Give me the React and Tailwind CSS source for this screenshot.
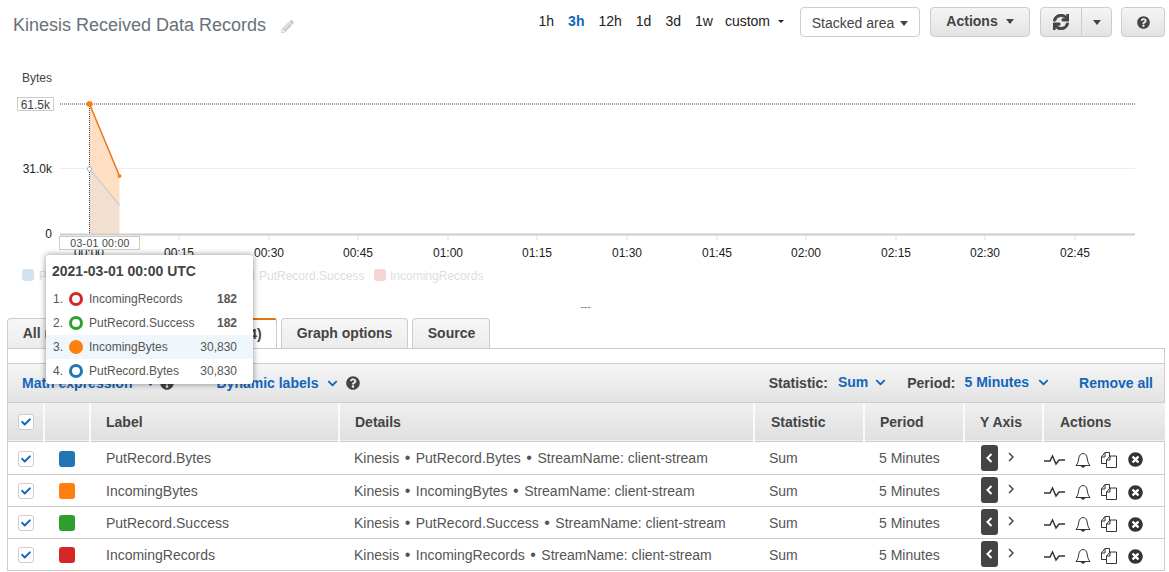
import { FaSync, FaQuestionCircle, FaPencilAlt, FaCheck, FaTimesCircle, FaChevronDown } from 'react-icons/fa';

const RANGES = ['1h', '3h', '12h', '1d', '3d', '1w'];
const TICKS = [
  ['00:15', 179], ['00:30', 269], ['00:45', 358], ['01:00', 448], ['01:15', 537], ['01:30', 627],
  ['01:45', 717], ['02:00', 806], ['02:15', 896], ['02:30', 985], ['02:45', 1075],
];
const TOOLTIP_ROWS = [
  { n: 1, label: 'IncomingRecords', value: '182', color: 'border-[#d62728]', bold: true },
  { n: 2, label: 'PutRecord.Success', value: '182', color: 'border-[#2ca02c]', bold: true },
  { n: 3, label: 'IncomingBytes', value: '30,830', color: 'border-[#ff7f0e] bg-[#ff7f0e]', active: true },
  { n: 4, label: 'PutRecord.Bytes', value: '30,830', color: 'border-[#1f77b4]' },
];
const METRICS = [
  { label: 'PutRecord.Bytes', color: 'bg-[#1f77b4]', h: 'h-[33px]' },
  { label: 'IncomingBytes', color: 'bg-[#ff7f0e]', h: 'h-[32px]' },
  { label: 'PutRecord.Success', color: 'bg-[#2ca02c]', h: 'h-[32px]' },
  { label: 'IncomingRecords', color: 'bg-[#d62728]', h: 'h-[32px]' },
];

function Caret() {
  return <span className="inline-block w-0 h-0 border-x-[4px] border-x-transparent border-t-[5px] border-t-[#444]" />;
}

function Checkbox() {
  return (
    <span className="flex items-center justify-center w-[16px] h-[16px] rounded-[3px] border border-[#ccc] bg-white">
      <FaCheck className="text-[#1166bb] text-[10px]" />
    </span>
  );
}

function Chart() {
  return (
    <svg width="1169" height="256" viewBox="0 46 1169 256" className="block" fontFamily="Liberation Sans, Arial, sans-serif">
      <text x="22" y="82" fontSize="12" fill="#444">Bytes</text>
      <line x1="60" x2="1135" y1="104" y2="104" stroke="#444" strokeDasharray="1 1" />
      <line x1="60" x2="1135" y1="168.5" y2="168.5" stroke="#eee" />
      <rect x="17.5" y="97.5" width="36" height="13" fill="#fff" stroke="#ccc" />
      <text x="50" y="109" fontSize="12" fill="#444" textAnchor="end">61.5k</text>
      <text x="52" y="173" fontSize="12" fill="#222" textAnchor="end">31.0k</text>
      <text x="52" y="238" fontSize="12" fill="#222" textAnchor="end">0</text>
      <polygon points="89.5,104 119.5,176 119.5,205 89.5,169" fill="#ffdfc3" />
      <polygon points="89.5,169 119.5,205 119.5,234 89.5,234" fill="#f3dfcf" />
      <line x1="89.5" x2="119.5" y1="169" y2="205" stroke="#d0d0d0" strokeWidth="1.5" />
      <line x1="89.5" x2="119.5" y1="104" y2="176" stroke="#e5761a" strokeWidth="1.5" />
      <line x1="89.5" x2="89.5" y1="104" y2="234" stroke="#444" strokeDasharray="1 1" />
      <circle cx="89.5" cy="104" r="3" fill="#ff7f0e" />
      <circle cx="119.5" cy="176" r="2" fill="#ff7f0e" />
      <circle cx="89.5" cy="169" r="2.2" fill="#fff" stroke="#8fb6d3" />
      <line x1="60" x2="1135" y1="234.5" y2="234.5" stroke="#ccc" strokeWidth="2" />
      {TICKS.map(([t, x]) => (
        <g key={t}>
          <line x1={x} x2={x} y1="235" y2="240" stroke="#ddd" />
          <text x={x} y="257" fontSize="12" fill="#222" textAnchor="middle">{t}</text>
        </g>
      ))}
      <text x="89" y="257" fontSize="12" fill="#222" textAnchor="middle">00:00</text>
      <rect x="59.5" y="236.5" width="80" height="13" fill="#fff" stroke="#ccc" />
      <text x="100" y="247" fontSize="10.5" fill="#444" textAnchor="middle" letterSpacing="0.3">03-01 00:00</text>
      <rect x="22" y="269" width="12" height="12" rx="3" fill="#d2e3f0" />
      <text x="39" y="280" fontSize="12" fill="#ddd">PutRecord.Bytes</text>
      <rect x="126" y="269" width="12" height="12" rx="3" fill="#ffe5cf" />
      <text x="143" y="280" fontSize="12" fill="#ddd">IncomingBytes</text>
      <rect x="242" y="269" width="12" height="12" rx="3" fill="#d5ecd5" />
      <text x="259" y="280" fontSize="12" fill="#ddd">PutRecord.Success</text>
      <rect x="374" y="269" width="12" height="12" rx="3" fill="#f7d4d4" />
      <text x="390" y="280" fontSize="12" fill="#ddd">IncomingRecords</text>
    </svg>
  );
}

function Tooltip() {
  return (
    <div className="absolute left-[46px] top-[255px] w-[207px] h-[129px] bg-white rounded-[3px] shadow-[0_0_6px_rgba(0,0,0,0.45)]">
      <div className="h-[32px] pl-[6px] pt-[8px] text-[14px] leading-[16px] font-bold text-[#444]">2021-03-01 00:00 UTC</div>
      {TOOLTIP_ROWS.map((r) => (
        <div key={r.n} className={`flex items-center h-[24px] text-[12px] text-[#555] ${r.active ? 'bg-[#f0f7fc]' : ''}`}>
          <span className="w-[23px] pl-[7px]">{r.n}.</span>
          <span className={`w-[14px] h-[14px] rounded-full border-[3px] ${r.color}`} />
          <span className="ml-[6px] flex-1">{r.label}</span>
          <span className={`pr-[16px] ${r.bold ? 'font-bold' : ''}`}>{r.value}</span>
        </div>
      ))}
    </div>
  );
}

function Tabs() {
  const base = 'flex items-center justify-center h-[30px] border border-b-0 border-[#ccc] rounded-t-[4px] bg-gradient-to-b from-[#f7f7f7] to-[#ececec] text-[14px] font-bold text-[#444]';
  return (
    <div className="flex items-end gap-[4px] pl-[7px] h-[30px]">
      <div className={`${base} w-[103px]`}>All metrics</div>
      <div className="flex items-center justify-center w-[163px] h-[30px] border-x border-[#ccc] border-t-[2px] border-t-[#dd7711] bg-white text-[14px] font-bold text-[#444] rounded-t-[3px]">Graphed metrics (4)</div>
      <div className={`${base} w-[127px]`}>Graph options</div>
      <div className={`${base} w-[78px] pl-[1px]`}>Source</div>
    </div>
  );
}

function Toolbar() {
  return (
    <div className="flex items-center h-[40px] pl-[14px] pr-[11px] bg-gradient-to-b from-[#f5f5f5] to-[#e3e3e3] border-y border-[#ccc] text-[14px] font-bold">
      <span className="text-[#1166bb]">Math expression</span>
      <FaChevronDown className="ml-[14px] text-[#1166bb] text-[9px]" />
      <FaQuestionCircle className="ml-[5px] text-[#444] text-[14px]" />
      <span className="ml-[42px] text-[#1166bb]">Dynamic labels</span>
      <FaChevronDown className="ml-[9px] text-[#1166bb] text-[11px]" />
      <FaQuestionCircle className="ml-[8px] text-[#444] text-[14px]" />
      <span className="ml-auto text-[#444]">Statistic:</span>
      <span className="ml-[10px] text-[#1166bb] -mt-[2px]">Sum</span>
      <FaChevronDown className="ml-[7px] text-[#1166bb] text-[11px] -mt-[2px]" />
      <span className="ml-[21px] text-[#444]">Period:</span>
      <span className="ml-[9px] text-[#1166bb] -mt-[2px]">5 Minutes</span>
      <FaChevronDown className="ml-[9px] text-[#1166bb] text-[11px] -mt-[2px]" />
      <span className="ml-[30px] text-[#1166bb]">Remove all</span>
    </div>
  );
}

function RowActions() {
  return (
    <div className="flex items-center mt-[4px] pl-[1px]">
      <svg width="21" height="12" viewBox="0 0 21 12" fill="none" stroke="#333" strokeWidth="1.5">
        <path d="M0 7h6l2.500-5 3.500 8 3-4h6" />
      </svg>
      <svg className="ml-[10px]" width="16" height="16" viewBox="0 0 16 16" fill="none" stroke="#333">
        <path d="M1 13.500c2-2 2.300-4.500 2.800-7.500C4.200 3.300 6 1.500 8 1.500s3.800 1.800 4.200 4.500c.5 3 .8 5.500 2.800 7.500z" />
        <path d="M6 14c.4 1.500 3.600 1.500 4 0" fill="#333" />
      </svg>
      <svg className="ml-[10px]" width="16" height="16" viewBox="0 0 16 16" fill="none" stroke="#333">
        <path d="M5.500 11.500H.5V5l3.500-4.500h4.500V4" />
        <path d="M4 .5V5H.5" />
        <path d="M5.500 8l3.500-4h6.500v11.500h-10z" fill="#fff" />
        <path d="M9 4v4H5.500" />
      </svg>
      <FaTimesCircle className="ml-[11px] text-[#333] text-[15px]" />
    </div>
  );
}

function YAxisToggle() {
  return (
    <div className="flex items-center">
      <span className="flex items-center justify-center w-[17px] h-[26px] rounded-[3px] bg-[#444]">
        <svg width="7" height="10" viewBox="0 0 7 10" fill="none" stroke="#fff" strokeWidth="2"><path d="M5.500 1L1.500 5l4 4" /></svg>
      </span>
      <svg className="ml-[10px] -mt-[2px]" width="6" height="10" viewBox="0 0 6 10" fill="none" stroke="#444" strokeWidth="1.5"><path d="M1 1l4 4-4 4" /></svg>
    </div>
  );
}

function Details({ label }) {
  return (
    <>
      Kinesis<span className="mx-[5.5px] text-[16px] leading-none">•</span>{label}<span className="mx-[5.5px] text-[16px] leading-none">•</span>StreamName: client-stream
    </>
  );
}

function MetricsTable() {
  const th = 'text-left font-bold text-[14px] text-[#444] border-l-2 border-white/80 pt-[2px] pl-[15px]';
  return (
    <table className="w-[1157px] table-fixed border-collapse text-[14px] text-[#555]">
      <thead>
        <tr className="h-[38px] bg-gradient-to-b from-[#f0f0f0] to-[#e0e0e0] border-b border-[#ccc]">
          <th className="w-[36px] pl-[10px]"><Checkbox /></th>
          <th className="w-[46px] border-l-2 border-white/80" />
          <th className={`w-[249px] ${th}`}>Label</th>
          <th className={`w-[415px] ${th}`}>Details</th>
          <th className={`w-[110px] ${th} pl-[16px]`}>Statistic</th>
          <th className={`w-[100px] ${th}`}>Period</th>
          <th className={`w-[79px] ${th}`}>Y Axis</th>
          <th className={`${th} pl-[16px]`}>Actions</th>
        </tr>
      </thead>
      <tbody>
        {METRICS.map((m) => (
          <tr key={m.label} className={`${m.h} border-b border-[#ccc]`}>
            <td className="pl-[10px] pt-[2px]"><Checkbox /></td>
            <td className="pl-[15px] pt-[2px]"><span className={`block w-[16px] h-[16px] rounded-[3px] ${m.color}`} /></td>
            <td className="pl-[16px] pt-[2px]">{m.label}</td>
            <td className="pl-[15px] pt-[2px]"><Details label={m.label} /></td>
            <td className="pl-[15px] pt-[2px]">Sum</td>
            <td className="pl-[15px] pt-[2px]">5 Minutes</td>
            <td className="pl-[17px]"><YAxisToggle /></td>
            <td className="pl-0"><RowActions /></td>
          </tr>
        ))}
      </tbody>
    </table>
  );
}

export default function App() {
  return (
    <div className="relative w-[1169px] h-[572px] overflow-hidden bg-white font-['Liberation_Sans',Arial,sans-serif]">
      <header className="flex items-start h-[46px] pr-[4px]">
        <h1 className="ml-[13px] mt-[14px] text-[18px] leading-[22px] text-[#687078]">Kinesis Received Data Records</h1>
        <FaPencilAlt className="ml-[15px] mt-[20px] text-[#ccc] text-[13px]" />
        <div className="ml-auto flex items-center h-[37px] pt-[5px] text-[14px] text-[#222]">
          {RANGES.map((r) => (
            <span key={r} className={`mr-[14px] ${r === '3h' ? 'text-[#1166bb] font-bold' : ''}`}>{r}</span>
          ))}
          <span className="-ml-[2px]">custom</span>
          <span className="ml-[8px] w-0 h-0 border-x-[3px] border-x-transparent border-t-[3px] border-t-[#222]" />
        </div>
        <div className="flex items-center gap-[6px] ml-[16px] mt-[7px] pt-[2px] h-[30px] w-[120px] justify-center bg-white border border-[#ccc] rounded-[4px] text-[14px] text-[#444]">
          Stacked area <Caret />
        </div>
        <div className="flex items-center gap-[8px] ml-[10px] mt-[7px] pb-[2px] h-[30px] w-[100px] justify-center bg-gradient-to-b from-[#f5f5f5] to-[#e3e3e3] border border-[#ccc] rounded-[4px] text-[14px] font-bold text-[#444]">
          Actions <Caret />
        </div>
        <div className="flex ml-[10px] mt-[7px] h-[30px] w-[72px] bg-gradient-to-b from-[#f5f5f5] to-[#e3e3e3] border border-[#ccc] rounded-[4px] text-[#444]">
          <span className="flex items-center justify-center w-[41px] border-r border-[#ccc]"><FaSync className="text-[16px] stroke-[30px]" stroke="currentColor" /></span>
          <span className="flex items-center justify-center flex-1"><Caret /></span>
        </div>
        <div className="flex items-center justify-center ml-[9px] mt-[7px] h-[30px] w-[44px] bg-gradient-to-b from-[#f5f5f5] to-[#e3e3e3] border border-[#ccc] rounded-[4px] text-[#444]">
          <FaQuestionCircle className="text-[13px]" />
        </div>
      </header>
      <Chart />
      <div className="h-[16px] text-center text-[10px] leading-[10px] text-[#777] pl-[2px]">---</div>
      <Tabs />
      <div className="ml-[7px] w-[1158px] border-x border-t border-[#ccc]">
        <div className="h-[14px]" />
        <Toolbar />
        <MetricsTable />
      </div>
      <Tooltip />
    </div>
  );
}
